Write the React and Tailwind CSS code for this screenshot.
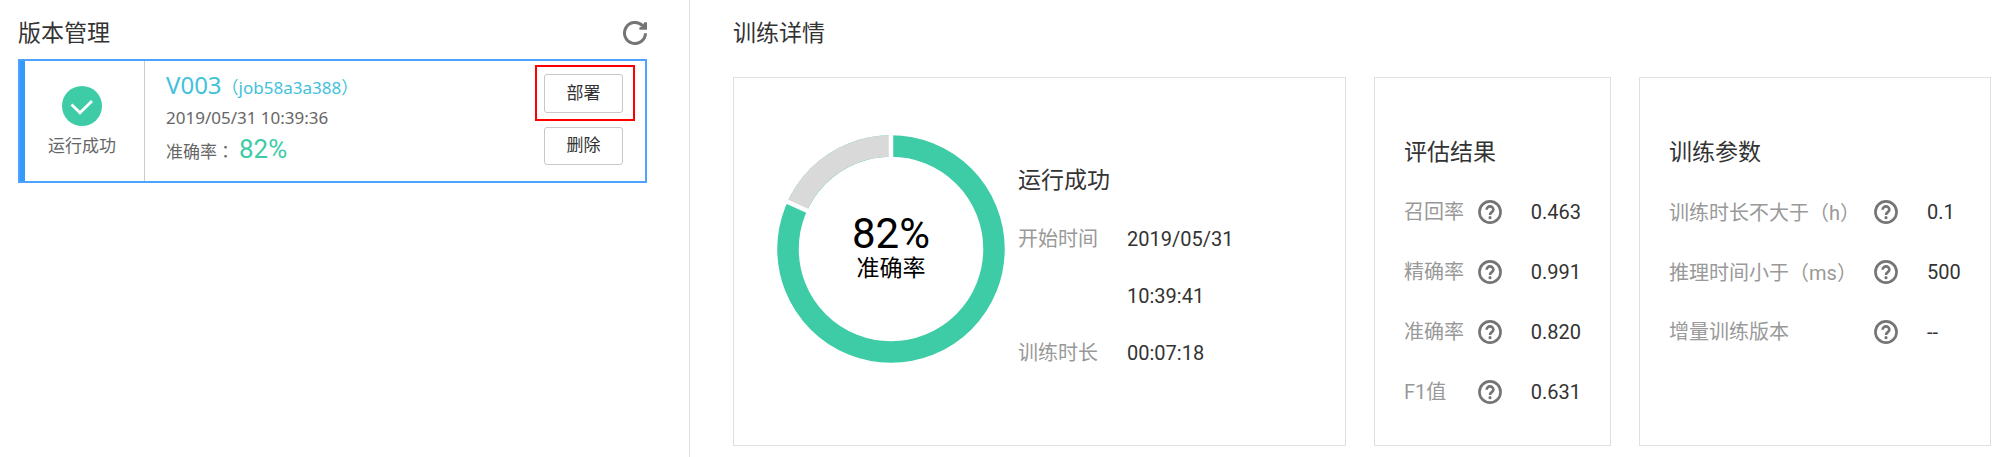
const SANS = "font-['Noto_Sans','Noto_Sans_CJK_SC',sans-serif]";

// Full-width punctuation centred in its cell
function Punct({ children }) {
  return <span lang="zh-TW" className="font-['Noto_Sans_CJK_TC',sans-serif]">{children}</span>;
}

function RefreshIcon() {
  return (
    <svg viewBox="4 4 16 16" className="size-6" aria-hidden="true">
      <path d="M19 12.2A7 7 0 1 1 17 7.1" fill="none" stroke="#757575" strokeWidth="2" />
      <path d="M18.3 4.8H20V9.9H14.9V8.4L16.2 7.9z" fill="#757575" />
    </svg>
  );
}

function HelpButton({ label }) {
  return (
    <button type="button" aria-label={label} className="block size-6 cursor-pointer">
      <svg viewBox="2 2 20 20" className="size-6" aria-hidden="true">
        <circle cx="12" cy="12" r="8.8" fill="none" stroke="#757575" strokeWidth="2.2" />
        <path d="M9.2 10.1a2.8 2.8 0 1 1 5.6 0c0 2-2.8 2.1-2.8 4.3" fill="none" stroke="#757575" strokeWidth="2.2" />
        <circle cx="12" cy="16.7" r="1.3" fill="#757575" />
      </svg>
    </button>
  );
}

function VersionCard() {
  return (
    <article className="flex border-2 border-[#4da3ff]">
      <div className="w-[5px] bg-[#3399ff]" />
      <div className="flex w-[120px] flex-col items-center border-r border-[#cccccc] pt-[25px] pr-[5px]">
        <svg viewBox="0 0 40 40" className="size-10" aria-hidden="true">
          <circle cx="20" cy="20" r="20" fill="#3dcca6" />
          <path d="M9.5 18.5 18 26.8 30 15" fill="none" stroke="#fff" strokeWidth="2.8" />
        </svg>
        <p className="mt-2 text-[17px] leading-6 text-[#666666]">运行成功</p>
      </div>
      <div className="flex-1 pt-2 pl-[21px] text-[17px] text-[#666666]">
        <p className="leading-8 text-[#41c1dc]">
          <a href="#V003">
            <span className="text-2xl">V003</span>
            <Punct>（</Punct>job58a3a388<Punct>）</Punct>
          </a>
        </p>
        <p className="leading-7">2019/05/31 10:39:36</p>
        <p className="leading-[34px]">
          准确率<Punct>：</Punct>
          <span className="ml-[5px] font-['Roboto',sans-serif] text-[26px]">
            <span className="text-[#3dcca6]">82%</span>
          </span>
        </p>
      </div>
      <div className="flex w-[101px] flex-col gap-[14px] pt-[13px] pb-4 text-[17px] text-[#333333]">
        <div className="relative w-[79px]">
          <button type="button" className="h-[39px] w-full cursor-pointer rounded-[3px] border border-[#c8c8c8] bg-white pb-[2px]">部署</button>
          <div className="pointer-events-none absolute -top-[9px] -right-3 -bottom-2 -left-[9px] border-2 border-[#ff0000]" />
        </div>
        <button type="button" className="h-[38px] w-[79px] cursor-pointer rounded-[3px] border border-[#c8c8c8] bg-white pb-[2px]">删除</button>
      </div>
    </article>
  );
}

function Donut() {
  return (
    <div className="relative size-[228px] shrink-0">
      <svg viewBox="-114 -114 228 228" className="size-full" aria-hidden="true">
        <g fill="none" strokeWidth="21.5" transform="rotate(-90)">
          <circle r="103" stroke="#3dcca6" />
          <circle r="103" stroke="#d9d9d9" pathLength="100" strokeDasharray="18 82" strokeDashoffset="-82" />
        </g>
        <g stroke="#fff" strokeWidth="4.5">
          <path d="M0 -85V-114" />
          <path d="M0 -85V-114" transform="rotate(-65.5)" />
        </g>
      </svg>
      <div className="absolute inset-0 flex flex-col items-center justify-center text-black">
        <span className="text-[42px] leading-10">82%</span>
        <span className="text-[23px] leading-[30px]">准确率</span>
      </div>
    </div>
  );
}

function StatusRow({ label, children }) {
  return (
    <tr className="align-top leading-[57px]">
      <th scope="row" className="w-[109px] text-left font-normal text-[#999999]">{label}</th>
      <td>{children}</td>
    </tr>
  );
}

function MetricCard({ title, rows, valueWidth }) {
  return (
    <section className="border border-[#e0e0e0] px-[29px] pt-[58px]">
      <h3 className="text-[23px] leading-[34px]">{title}</h3>
      <table className="mt-3 w-full text-xl">
        <tbody>
          {rows.map(({ key, label, value }) => (
            <tr key={key} className="h-[60px]">
              <th scope="row" className="text-left font-normal whitespace-nowrap text-[#999999]">{label}</th>
              <td className="w-6">
                <HelpButton label={key} />
              </td>
              <td className={`pl-[29px] ${valueWidth}`}>{value}</td>
            </tr>
          ))}
        </tbody>
      </table>
    </section>
  );
}

const results = [
  { key: "召回率", label: "召回率", value: "0.463" },
  { key: "精确率", label: "精确率", value: "0.991" },
  { key: "准确率", label: "准确率", value: "0.820" },
  { key: "F1值", label: "F1值", value: "0.631" },
];

const params = [
  { key: "训练时长", label: <>训练时长不大于<Punct>（</Punct>h<Punct>）</Punct></>, value: "0.1" },
  { key: "推理时间", label: <>推理时间小于<Punct>（</Punct>ms<Punct>）</Punct></>, value: "500" },
  { key: "增量训练版本", label: "增量训练版本", value: "--" },
];

export default function App() {
  return (
    <main lang="zh-CN" className="flex min-h-screen bg-white font-['Roboto','Noto_Sans_CJK_SC',sans-serif] text-[#333333]">
      <aside className={`w-[34.5%] border-r border-[#e0e0e0] pr-[42px] pl-[18px] ${SANS}`}>
        <header className="flex h-[59px] items-center justify-between pt-[6px]">
          <h2 className="text-[23px]">版本管理</h2>
          <button type="button" aria-label="刷新" className="cursor-pointer">
            <RefreshIcon />
          </button>
        </header>
        <VersionCard />
      </aside>
      <div className="flex-1 pr-[9px] pb-[10px] pl-[43px]">
        <h2 className="flex h-[77px] items-start pt-[17px] text-[23px] leading-[34px]">训练详情</h2>
        <div className="grid min-h-[369px] grid-cols-[613fr_237fr_352fr] gap-7">
          <section className="flex items-start border border-[#e0e0e0] pt-[57px] pl-[43px]">
            <Donut />
            <div className="ml-[13px] pt-[29px]">
              <h3 className="text-[23px] leading-[34px]">运行成功</h3>
              <table className="mt-[13px] text-xl">
                <tbody>
                  <StatusRow label="开始时间">
                    2019/05/31
                    <br />
                    10:39:41
                  </StatusRow>
                  <StatusRow label="训练时长">00:07:18</StatusRow>
                </tbody>
              </table>
            </div>
          </section>
          <MetricCard title="评估结果" rows={results} valueWidth="w-[79px]" />
          <MetricCard title="训练参数" rows={params} valueWidth="w-[63px]" />
        </div>
      </div>
    </main>
  );
}
